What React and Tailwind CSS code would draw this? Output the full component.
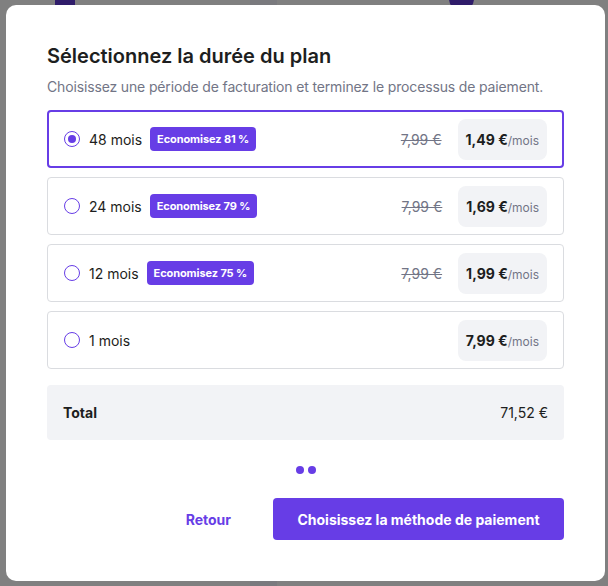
import React, { useState } from 'react';

const plans = [
  { id: 48, label: '48 mois', save: 'Economisez 81 %', old: '7,99 €', price: '1,49 €' },
  { id: 24, label: '24 mois', save: 'Economisez 79 %', old: '7,99 €', price: '1,69 €' },
  { id: 12, label: '12 mois', save: 'Economisez 75 %', old: '7,99 €', price: '1,99 €' },
  { id: 1, label: '1 mois', save: null, old: null, price: '7,99 €' },
];

const PlanRow = ({ plan, selected, onSelect }) => (
  <button
    onClick={onSelect}
    className={`w-full h-[58px] flex items-center rounded-[4px] bg-white text-left ${
      selected ? 'border-2 border-[#673de6] pl-[15px] pr-[15px]' : 'border border-[#dadce0] pl-4 pr-4'
    }`}
  >
    <span className="w-4 h-4 rounded-full border-[1.5px] border-[#673de6] flex items-center justify-center shrink-0">
      {selected && <span className="w-2 h-2 rounded-full bg-[#673de6]" />}
    </span>
    <span className="ml-[9px] text-[14px] text-[#1d1e20]">{plan.label}</span>
    {plan.save && (
      <span className="ml-2 h-6 px-[7px] flex items-center rounded-[4px] bg-[#673de6] text-white text-[11px] font-bold tracking-[-0.1px]">
        {plan.save}
      </span>
    )}
    <span className="flex-1" />
    {plan.old && (
      <span className="text-[14px] text-[#727586] line-through mr-4">{plan.old}</span>
    )}
    <span className="h-[41px] px-2 flex items-center rounded-lg bg-[#f2f3f6]">
      <span className="flex items-baseline">
        <span className="text-[14px] font-bold text-[#1d1e20]">{plan.price}</span>
        <span className="text-[12px] text-[#727586]">/mois</span>
      </span>
    </span>
  </button>
);

export default function App() {
  const [selected, setSelected] = useState(48);

  return (
    <div className="relative w-[608px] h-[586px] bg-[#808080] overflow-hidden" style={{ fontFamily: 'Inter, "Liberation Sans", sans-serif' }}>
      {/* dimmed page behind */}
      <div className="absolute left-[55px] top-0 w-5 h-[5px] bg-[#2f1c6a]" />
      <div className="absolute left-[250px] top-0 w-[27px] h-full bg-[#7a7a7e]" />
      <div className="absolute left-[449px] -top-3 w-[25px] h-[22px] rounded-full bg-[#2f1c6a]" />

      <div className="absolute left-[6px] top-[5px] w-[599px] h-[576px] bg-white rounded-[10px] px-[41px] pt-[37px]">
        <h2 className="text-[20px] font-semibold text-[#1d1e20] leading-7">
          Sélectionnez la durée du plan
        </h2>
        <p className="mt-[7px] text-[14px] text-[#727586] leading-5 tracking-[-0.15px]">
          Choisissez une période de facturation et terminez le processus de paiement.
        </p>

        <div className="mt-[13px] flex flex-col gap-[9px]">
          {plans.map((p) => (
            <PlanRow key={p.id} plan={p} selected={selected === p.id} onSelect={() => setSelected(p.id)} />
          ))}
        </div>

        <div className="mt-4 h-[55px] rounded-[4px] bg-[#f2f3f6] flex items-center justify-between px-4">
          <span className="text-[14px] font-bold text-[#1d1e20]">Total</span>
          <span className="text-[14px] text-[#1d1e20]">71,52 €</span>
        </div>

        <div className="mt-[26px] flex justify-center gap-1">
          <span className="w-2 h-2 rounded-full bg-[#673de6]" />
          <span className="w-2 h-2 rounded-full bg-[#673de6]" />
        </div>

        <div className="mt-6 flex justify-end items-center gap-[42px]">
          <button className="text-[14px] font-bold text-[#673de6]">Retour</button>
          <button className="h-[42px] w-[291px] rounded-[4px] bg-[#673de6] text-white text-[14px] font-bold">
            Choisissez la méthode de paiement
          </button>
        </div>
      </div>
    </div>
  );
}
